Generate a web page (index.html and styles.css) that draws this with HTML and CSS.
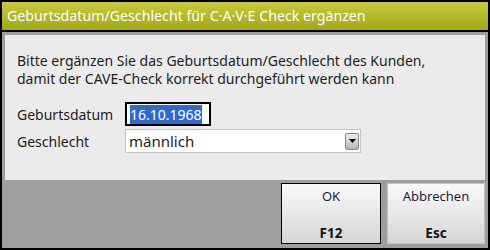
FILE: index.html
```html
<!DOCTYPE html>
<html lang="de">
<head>
  <meta charset="UTF-8">
  <meta name="viewport" content="width=device-width, initial-scale=1.0">
  <title>Geburtsdatum/Geschlecht ergänzen</title>
  <link rel="stylesheet" href="styles.css">
</head>
<body>
  <div class="window">
    <div class="titlebar">Geburtsdatum/Geschlecht für C·A·V·E Check ergänzen</div>
    <div class="frame">
      <!-- Eingabebereich -->
      <div class="panel">
        <p class="hint">Bitte ergänzen Sie das Geburtsdatum/Geschlecht des Kunden,<br>damit der CAVE-Check korrekt durchgeführt werden kann</p>
        <div class="form">
          <label for="dob">Geburtsdatum</label>
          <div class="datebox" id="dob"><span class="selected">16.10.1968</span></div>
          <label for="sex">Geschlecht</label>
          <div class="combo" id="sex">
            <span>männlich</span>
            <span class="drop"><svg width="7" height="4" viewBox="0 0 7 4"><path d="M0 0h7L3.5 4z" fill="#000"/></svg></span>
          </div>
        </div>
      </div>
      <!-- Buttons -->
      <div class="buttons">
        <button class="btn default"><span>OK</span><b>F12</b></button>
        <button class="btn"><span>Abbrechen</span><b>Esc</b></button>
      </div>
    </div>
  </div>
</body>
</html>
```

FILE: styles.css
```css
body {
  margin: 0;
  font-family: "Noto Sans", sans-serif;
}
.window {
  width: 490px;
  height: 250px;
  box-sizing: border-box;
  border: 2px solid #000;
  display: flex;
  flex-direction: column;
}
.titlebar {
  height: 28px;
  border-bottom: 2px solid #000;
  background: linear-gradient(#c8cb40, #a1a716);
  color: #fff;
  font-size: 14.2px;
  line-height: 28px;
  padding-left: 5px;
}
.frame {
  flex: 1;
  background-color: #9e9e9e;
  padding: 3px 3px 0 3px;
  display: flex;
  flex-direction: column;
}
.panel {
  height: 145px;
  box-sizing: border-box;
  background-color: #ebebeb;
  padding: 17px 12px 0 12px;
  color: #1c1c1c;
  font-size: 14px;
}
.hint {
  margin: 0;
  line-height: 18px;
}
.form {
  margin-top: 14px;
  display: grid;
  grid-template-columns: 108px auto;
  grid-auto-rows: 24px;
  row-gap: 3px;
  align-items: center;
}
.datebox {
  width: 86px;
  height: 24px;
  box-sizing: border-box;
  border: 2px solid #000;
  background-color: #fff;
  padding: 1px 0 0 3px;
  font-size: 14px;
  line-height: 19px;
}
.selected {
  background-color: #3169c6;
  color: #fff;
}
.combo {
  width: 236px;
  height: 24px;
  box-sizing: border-box;
  border: 1px solid #c6c6c6;
  background-color: #fff;
  display: flex;
  align-items: center;
  justify-content: space-between;
  padding: 0 1px 0 3px;
  font-size: 15px;
}
.drop {
  width: 14px;
  height: 17px;
  box-sizing: border-box;
  border: 1px solid #8a8a8a;
  border-radius: 2px;
  background: linear-gradient(#f0f0f0, #b4b4b4);
  display: flex;
  align-items: center;
  justify-content: center;
}
.buttons {
  display: flex;
  justify-content: flex-end;
  gap: 6px;
  margin-top: 3px;
}
.btn {
  width: 98px;
  height: 61px;
  box-sizing: border-box;
  border: 1px solid #c4c4c4;
  background: linear-gradient(#fafafa, #d6d6d6);
  display: flex;
  flex-direction: column;
  align-items: center;
  justify-content: space-between;
  padding: 3px 0 1px 0;
  font-family: "Noto Sans", sans-serif;
  font-size: 13px;
  color: #1e1e3c;
}
.btn.default {
  width: 100px;
  border: 1px solid #000;
}
.btn b {
  color: #111;
  font-size: 13.5px;
}
```
